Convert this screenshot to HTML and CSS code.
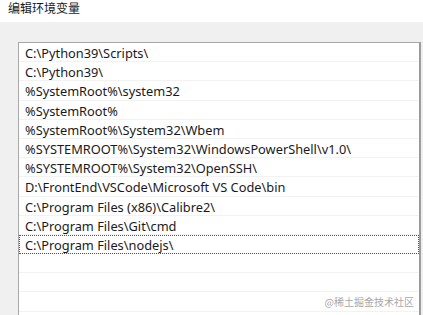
FILE: index.html
```html
<!DOCTYPE html>
<html>
  <head>
    <title>编辑环境变量</title>
    <meta charset="UTF-8">
    <link rel="stylesheet" href="styles.css">
  </head>
  <body>
    <div class="title_bar">编辑环境变量</div>
    <div class="dialog">
      <div class="path_list">
        <div class="row">C:\Python39\Scripts\</div>
        <div class="row">C:\Python39\</div>
        <div class="row">%SystemRoot%\system32</div>
        <div class="row">%SystemRoot%</div>
        <div class="row">%SystemRoot%\System32\Wbem</div>
        <div class="row">%SYSTEMROOT%\System32\WindowsPowerShell\v1.0\</div>
        <div class="row">%SYSTEMROOT%\System32\OpenSSH\</div>
        <div class="row">D:\FrontEnd\VSCode\Microsoft VS Code\bin</div>
        <div class="row">C:\Program Files (x86)\Calibre2\</div>
        <div class="row">C:\Program Files\Git\cmd</div>
        <div class="row focus">C:\Program Files\nodejs\</div>
        <div class="row"></div>
        <div class="row"></div>
        <div class="row"></div>
      </div>
      <div class="watermark">@稀土掘金技术社区</div>
    </div>
  </body>
</html>
```
FILE: styles.css
```css
body
{
  margin: 0;
  padding: 0;
  width: 423px;
  height: 315px;
  overflow: hidden;
  background: #f0f0f0;
  font-family: "Noto Sans", "Noto Sans CJK SC", sans-serif;
  color: #1a1a1a;
}
.title_bar
{
  background: #ffffff;
  height: 22px;
  padding-left: 8px;
  font-size: 12px;
  line-height: 16px;
  font-family: "Noto Sans CJK SC", sans-serif;
}
.dialog
{
  position: relative;
  padding: 20px 2px 0 18px;
  height: 273px;
  overflow: hidden;
}
.path_list
{
  background: #ffffff;
  border: 1px solid #a8a8a8;
  border-right: 2px solid #9c9c9c;
  border-bottom: none;
  height: 300px;
}
.row
{
  height: 19.2px;
  line-height: 20px;
  padding-left: 6px;
  font-size: 12.8px;
  border-bottom: 1px solid #f2f2f2;
  box-sizing: border-box;
  white-space: nowrap;
}
.focus
{
  outline: 1px dotted #555555;
  outline-offset: -1px;
}
.watermark
{
  position: absolute;
  right: 9px;
  bottom: 6px;
  font-size: 10px;
  color: #a8a8a8;
  font-family: "Noto Sans CJK SC", sans-serif;
}
```
